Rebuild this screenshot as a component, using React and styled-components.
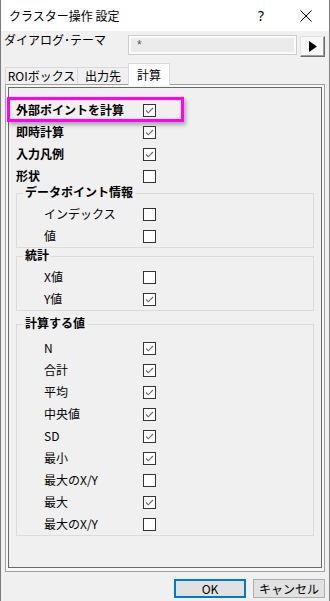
import React from "react";
import styled, { createGlobalStyle } from "styled-components";

const GlobalStyle = createGlobalStyle`
  html, body {
    margin: 0;
    padding: 0;
    background: #f0f0f0;
  }
  body {
    font-family: "Noto Sans CJK JP", "Liberation Sans", sans-serif;
    font-size: 12px;
    color: #000;
  }
  * {
    box-sizing: border-box;
  }
`;

const Window = styled.div`
  position: relative;
  width: 330px;
  height: 601px;
  background: #f0f0f0;
  border-left: 1px solid #7a7a7a;
  border-right: 1px solid #7a7a7a;
  display: flex;
  flex-direction: column;
  overflow: hidden;
`;

const TitleBar = styled.div`
  height: 31px;
  flex: 0 0 31px;
  background: #fff;
  display: flex;
  align-items: center;
  padding-left: 8px;
`;

const Title = styled.div`
  flex: 1;
  font-size: 12px;
  line-height: 16px;
`;

const CaptionButton = styled.div`
  width: ${(p) => p.$w}px;
  height: 31px;
  display: flex;
  align-items: center;
  justify-content: center;
  font-family: "Noto Sans", "DejaVu Sans", sans-serif;
  font-size: 14px;
`;

const ThemeRow = styled.div`
  height: 32px;
  flex: 0 0 32px;
  display: flex;
  align-items: flex-start;
  padding: 4px 0 0 3px;
`;

const ThemeLabel = styled.div`
  width: 124px;
  line-height: 16px;
  margin-top: -3px;
`;

const ThemeField = styled.div`
  width: 169px;
  height: 20px;
  border: 1px solid #cdcdcd;
  background: #ebebeb;
  box-shadow: inset 0 0 0 2px #fafafa;
  color: #555;
  padding-left: 8px;
  line-height: 18px;
  font-family: "Liberation Sans", sans-serif;
  font-size: 12px;
`;

const ArrowButton = styled.div`
  width: 25px;
  height: 21px;
  margin: 1px 0 0 3px;
  background: #f7f7f7;
  border-top: 1px solid #e3e3e3;
  border-left: 1px solid #e3e3e3;
  border-right: 1px solid #6a6a6a;
  border-bottom: 1px solid #6a6a6a;
  box-shadow: inset -1px -1px 0 #a0a0a0;
  display: flex;
  align-items: center;
  justify-content: center;
`;

const TabStrip = styled.div`
  position: relative;
  z-index: 1;
  height: 22px;
  flex: 0 0 22px;
  margin-bottom: -1px;
  padding-left: 4px;
  display: flex;
  align-items: flex-start;
`;

const Tab = styled.div`
  width: ${(p) => p.$w}px;
  height: ${(p) => (p.$active ? 22 : 17)}px;
  margin-top: ${(p) => (p.$active ? 0 : 4)}px;
  margin-left: ${(p) => (p.$first ? 0 : -1)}px;
  padding-top: ${(p) => (p.$active ? 3 : 0)}px;
  background: ${(p) => (p.$active ? "#fff" : "#f0f0f0")};
  border: 1px solid #d9d9d9;
  border-bottom: none;
  text-align: center;
  line-height: 16px;
  position: relative;
  z-index: ${(p) => (p.$active ? 2 : 1)};
`;

const Frame = styled.div`
  width: 320px;
  height: 488px;
  flex: 0 0 488px;
  margin-left: 4px;
  border: 1px solid #a0a0a0;
  padding: 2px 2px 3px 2px;
  background: #f7f7f7;
`;

const Page = styled.div`
  height: 100%;
  border: 1px solid #696969;
  background: #f0f0f0;
  padding-top: 11px;
`;

const Row = styled.div`
  height: 22px;
  display: flex;
  align-items: center;
  padding-left: ${(p) => p.$indent}px;
`;

const RowLabel = styled.div`
  width: ${(p) => p.$w}px;
  flex: 0 0 ${(p) => p.$w}px;
  font-weight: ${(p) => (p.$bold ? "bold" : "normal")};
  line-height: 16px;
  white-space: nowrap;
`;

const Box = styled.div`
  width: 13px;
  height: 13px;
  border: 1px solid #333;
  background: #fff;
  display: flex;
  align-items: center;
  justify-content: center;
`;

const Group = styled.fieldset`
  margin: ${(p) => p.$mt}px 7px 0 7px;
  padding: ${(p) => p.$pt}px 0 0 0;
  border: 1px solid #dcdcdc;
  min-width: 0;
`;

const GroupTitle = styled.legend`
  margin-left: 6px;
  padding: 0 2px 2px 2px;
  line-height: 14px;
  font-weight: bold;
`;

const Footer = styled.div`
  flex: 1;
  display: flex;
  justify-content: flex-end;
  align-items: flex-start;
  gap: 7px;
  padding: 7px 4px 0 0;
`;

const Button = styled.div`
  width: 72px;
  height: 19px;
  background: #e1e1e1;
  border: ${(p) => (p.$default ? "2px solid #0078d7" : "1px solid #adadad")};
  display: flex;
  align-items: center;
  justify-content: center;
  line-height: 14px;
`;

const Highlight = styled.div`
  position: absolute;
  left: 6px;
  top: 97px;
  width: 177px;
  height: 25px;
  border: 3px solid #ff00ff;
  box-shadow: 2px 3px 4px rgba(0, 0, 0, 0.3);
  pointer-events: none;
`;

const Check = () => (
  <svg width="11" height="11" viewBox="0 0 11 11">
    <path d="M2 5.5 L4.3 7.8 L9 3" fill="none" stroke="#6b6b6b" strokeWidth="1.1" />
  </svg>
);

const CheckBox = ({ checked }) => <Box>{checked && <Check />}</Box>;

const topRows = [
  { label: "外部ポイントを計算", checked: true },
  { label: "即時計算", checked: true },
  { label: "入力凡例", checked: true },
  { label: "形状", checked: false },
];

const groups = [
  {
    title: "データポイント情報",
    mt: -2,
    pt: 2,
    items: [
      { label: "インデックス", checked: false },
      { label: "値", checked: false },
    ],
  },
  {
    title: "統計",
    mt: 0,
    pt: 2,
    items: [
      { label: "X値", checked: false },
      { label: "Y値", checked: true },
    ],
  },
  {
    title: "計算する値",
    mt: 5,
    pt: 5,
    items: [
      { label: "N", checked: true },
      { label: "合計", checked: true },
      { label: "平均", checked: true },
      { label: "中央値", checked: true },
      { label: "SD", checked: true },
      { label: "最小", checked: true },
      { label: "最大のX/Y", checked: false },
      { label: "最大", checked: true },
      { label: "最大のX/Y", checked: false },
    ],
  },
];

const App = () => {
  return (
    <>
      <GlobalStyle />
      <Window>
        <TitleBar>
          <Title>クラスター操作 設定</Title>
          <CaptionButton $w={44}>?</CaptionButton>
          <CaptionButton $w={46}>
            <svg width="12" height="12" viewBox="0 0 12 12">
              <path d="M0.5 0.5 L11.5 11.5 M11.5 0.5 L0.5 11.5" stroke="#000" strokeWidth="1" />
            </svg>
          </CaptionButton>
        </TitleBar>

        <ThemeRow>
          <ThemeLabel>ダイアログ･テーマ</ThemeLabel>
          <ThemeField>*</ThemeField>
          <ArrowButton>
            <svg width="8" height="11" viewBox="0 0 8 11">
              <path d="M0 0 L8 5.5 L0 11 Z" fill="#000" />
            </svg>
          </ArrowButton>
        </ThemeRow>

        <TabStrip>
          <Tab $w={73} $first>ROIボックス</Tab>
          <Tab $w={52}>出力先</Tab>
          <Tab $w={42} $active>計算</Tab>
        </TabStrip>

        <Frame>
          <Page>
            {topRows.map((row) => (
              <Row key={row.label} $indent={7}>
                <RowLabel $w={127} $bold>{row.label}</RowLabel>
                <CheckBox checked={row.checked} />
              </Row>
            ))}
            {groups.map((group) => (
              <Group key={group.title} $mt={group.mt} $pt={group.pt}>
                <GroupTitle>{group.title}</GroupTitle>
                {group.items.map((item, i) => (
                  <Row key={i} $indent={27}>
                    <RowLabel $w={99}>{item.label}</RowLabel>
                    <CheckBox checked={item.checked} />
                  </Row>
                ))}
              </Group>
            ))}
          </Page>
        </Frame>

        <Footer>
          <Button $default>OK</Button>
          <Button>キャンセル</Button>
        </Footer>

        <Highlight />
      </Window>
    </>
  );
};

export default App;
